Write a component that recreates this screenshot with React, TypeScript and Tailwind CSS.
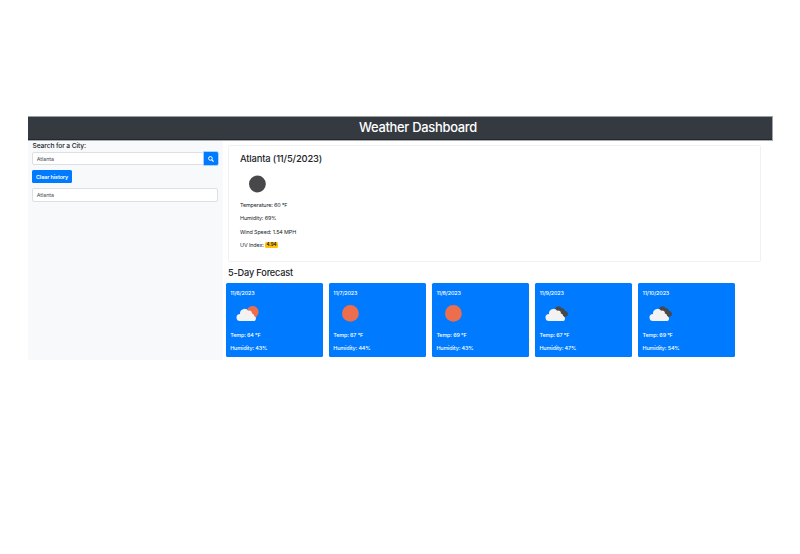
type Sky = "sun" | "partly" | "broken";

const days: { date: string; sky: Sky; temp: number; humidity: number }[] = [
  { date: "11/6/2023", sky: "partly", temp: 64, humidity: 43 },
  { date: "11/7/2023", sky: "sun", temp: 67, humidity: 44 },
  { date: "11/8/2023", sky: "sun", temp: 69, humidity: 43 },
  { date: "11/9/2023", sky: "broken", temp: 67, humidity: 47 },
  { date: "11/10/2023", sky: "broken", temp: 69, humidity: 54 },
];

function SkyIcon({ sky }: { sky: Sky }) {
  return (
    <svg className="block h-[34px] w-[34px]" viewBox="0 0 34 34">
      {sky === "sun" && <circle cx="17.4" cy="16.4" r="8.4" fill="#ec6e4c" />}
      {sky === "partly" && <circle cx="22.6" cy="15" r="6" fill="#ec6e4c" />}
      {sky === "broken" && (
        <path
          d="M15.9 13.2a3.6 3.6 0 0 1 6.8-1.9a2.8 2.8 0 0 1 3.3 2.6a2.6 2.6 0 0 1 2.8 2.5a2.6 2.6 0 0 1-2.4 3.3H18z"
          fill="#48484a"
        />
      )}
      {sky !== "sun" && (
        <path
          d="M10.2 24.1a3.6 3.6 0 0 1-.2-7.2a4.6 4.6 0 0 1 8.2-3.2a2.7 2.7 0 0 1 3.7 2.9a2.6 2.6 0 0 1 2.3 2.4a2.6 2.6 0 0 1 1.8 2.5a2.6 2.6 0 0 1-2.6 2.6z"
          fill="#f2f2f2"
        />
      )}
    </svg>
  );
}

export default function App() {
  return (
    <div className="h-[554px] w-[800px] overflow-hidden bg-white pl-[28px] pt-[116px] font-['Inter','Liberation_Sans',sans-serif] text-[5.4px] leading-[8px] tracking-[-0.11px] text-[#212529]">
      <div className="w-[745px]">
        <header className="flex h-[25px] items-center justify-center border-b border-r border-t border-b-[#a9acb0] border-r-[#a0a4a8] border-t-[#9a9ea2] bg-[#343a40] pb-[1px] pl-[36px] shadow-[inset_0_-1px_0_#23282d]">
          <h1 className="text-[12.9px] font-medium leading-[16px] tracking-[-0.27px] text-white">Weather Dashboard</h1>
        </header>
        <div className="flex">
          <aside className="h-[219px] w-[195px] bg-[#f8f9fa] pl-[4px] pr-[5px] pt-[0.5px]">
            <h2 className="h-[10.5px] pl-[0.5px] text-[6.7px] font-medium leading-[9px]">Search for a City:</h2>
            <div className="flex h-[13px]">
              <div className="flex flex-1 items-center rounded-l-[2px] border border-[#dce0e4] bg-white pl-[3.7px] pt-[0.5px] tracking-[-0.05px] text-[#495057]">
                Atlanta
              </div>
              <button className="flex w-[14px] items-center justify-center rounded-r-[1.5px] bg-[#007bff] shadow-[0_0_0_0.7px_#8ec3fb]">
                <svg className="h-[6px] w-[6px]" viewBox="0 0 12 12" fill="none" stroke="white" strokeWidth="2">
                  <circle cx="4.8" cy="4.8" r="3.7" />
                  <path d="M7.5 7.5l3.7 3.7" strokeWidth="2.3" />
                </svg>
              </button>
            </div>
            <button className="mt-[5px] flex h-[13px] w-[40px] items-center justify-center rounded-[1.5px] bg-[#007bff] font-semibold text-white">
              Clear history
            </button>
            <div className="mt-[5px] flex h-[13.5px] items-center rounded-[2px] border border-[#dce0e4] bg-white pl-[3.7px] pt-[0.5px] tracking-[-0.05px] text-[#495057]">
              Atlanta
            </div>
          </aside>
          <main className="flex-1 pl-[2.5px] pt-[4px]">
            <section className="ml-[2.5px] h-[117px] w-[533px] rounded-[1.5px] border border-[#f1f1f1] pl-[11px] pt-[6px]">
              <h2 className="h-[14px] text-[9.4px] font-medium leading-[14px] tracking-[-0.15px]">Atlanta (11/5/2023)</h2>
              <svg className="mt-[1.5px] block h-[32px] w-[34px]" viewBox="0 0 34 32">
                <circle cx="17.4" cy="16" r="8.4" fill="#48484a" />
              </svg>
              <div className="flex flex-col gap-[5.5px] pt-[1px]">
                <p>Temperature: 60 °F</p>
                <p>Humidity: 69%</p>
                <p>Wind Speed: 1.54 MPH</p>
                <p className="flex items-center gap-[1.5px]">
                  UV Index:
                  <span className="flex h-[6px] w-[12.5px] items-center justify-center rounded-[1.5px] bg-[#ffc107] text-[4.3px] font-bold tracking-normal">
                    4.94
                  </span>
                </p>
              </div>
            </section>
            <h2 className="ml-[2.5px] mt-[4px] h-[17px] text-[9.2px] font-medium leading-[14px] tracking-[-0.17px]">5-Day Forecast</h2>
            <div className="flex gap-[5.5px]">
              {days.map((d) => (
                <article key={d.date} className="h-[74px] w-[97.6px] rounded-[1.5px] bg-[#007bff] pl-[4.7px] pt-[5.8px] font-medium text-white">
                  <p>{d.date}</p>
                  <SkyIcon sky={d.sky} />
                  <p>Temp: {d.temp} °F</p>
                  <p className="mt-[5.5px]">Humidity: {d.humidity}%</p>
                </article>
              ))}
            </div>
          </main>
        </div>
      </div>
    </div>
  );
}
